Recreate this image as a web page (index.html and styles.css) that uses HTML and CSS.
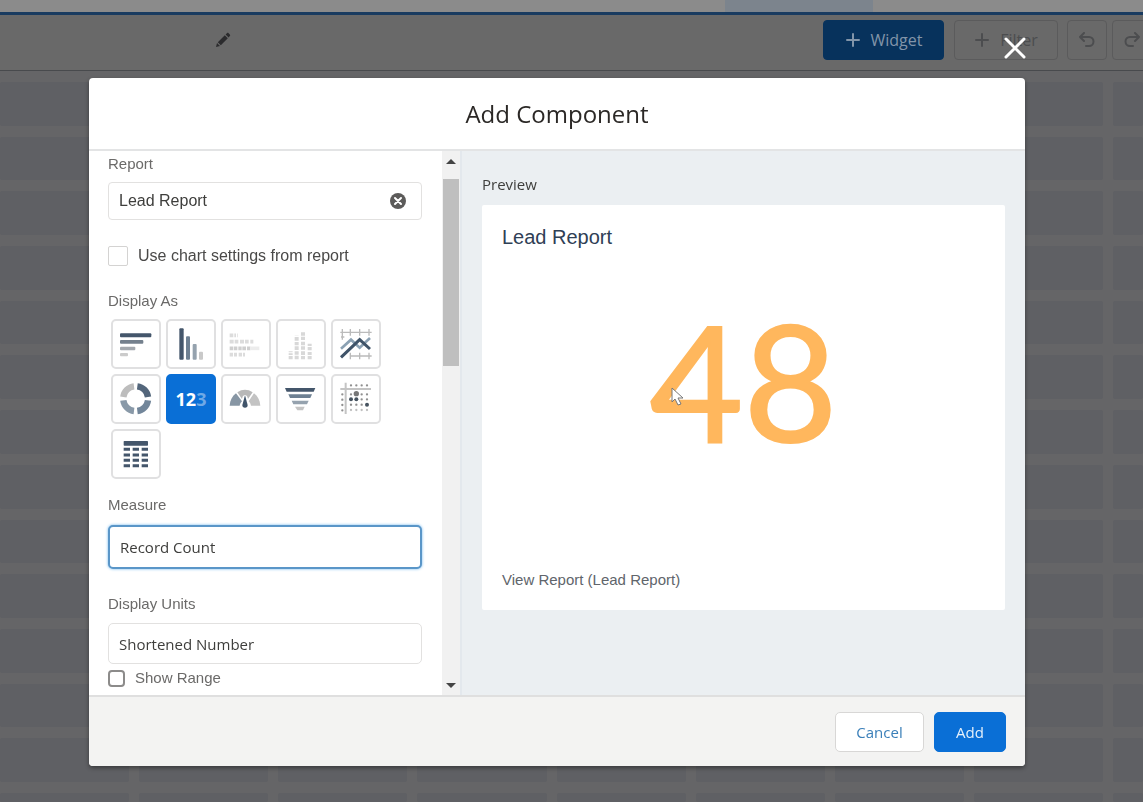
FILE: index.html
```html
<!DOCTYPE html>
<html lang="en">
<head>
    <meta charset="UTF-8">
    <meta name="viewport" content="width=device-width, initial-scale=1.0">
    <title>Add Component</title>
    <link rel="stylesheet" href="styles.css">
</head>
<body>
    <div class="page">
        <div class="tab-bar">
            <div class="tab-active"></div>
        </div>
        <div class="toolbar">
            <button class="edit-title" aria-label="Edit dashboard name">
                <svg width="16" height="16" viewBox="0 0 16 16" fill="#2b2b2d">
                    <path d="M1 15l1-4 3 3zM2.8 10.2l7-7 3 3-7 7zM10.6 2.400l1.300-1.200c.5-.5 1.200-.5 1.700 0l1.200 1.200c.5.5.5 1.200 0 1.700l-1.200 1.300z"/>
                </svg>
            </button>
            <div class="toolbar-actions">
                <button class="tool-button widget">
                    <svg width="16" height="16" viewBox="0 0 16 16" stroke="currentColor" stroke-width="2" stroke-linecap="round"><path d="M8 2v12M2 8h12"/></svg>
                    Widget
                </button>
                <button class="tool-button filter">
                    <svg width="16" height="16" viewBox="0 0 16 16" stroke="currentColor" stroke-width="2" stroke-linecap="round"><path d="M8 2v12M2 8h12"/></svg>
                    Filter
                </button>
                <button class="tool-button history" aria-label="Undo">
                    <svg width="16" height="16" viewBox="0 0 16 16" fill="none" stroke="currentColor" stroke-width="2" stroke-linecap="round" stroke-linejoin="round"><path d="M5 1L1 5l4 4M1 5h9a4.500 4.500 0 0 1 0 9H7"/></svg>
                </button>
                <button class="tool-button history" aria-label="Redo">
                    <svg width="16" height="16" viewBox="0 0 16 16" fill="none" stroke="currentColor" stroke-width="2" stroke-linecap="round" stroke-linejoin="round"><path d="M11 1l4 4-4 4M15 5H6a4.500 4.500 0 0 0 0 9h3"/></svg>
                </button>
            </div>
        </div>
        <div class="canvas-grid" id="canvas-grid"></div>
    </div>

    <div class="backdrop">
        <div class="modal" role="dialog" aria-labelledby="modal-title">
            <button class="close" aria-label="Close">
                <svg width="22" height="22" viewBox="0 0 22 22" stroke="#fff" stroke-width="3" stroke-linecap="round"><path d="M2 2l18 18M20 2L2 20"/></svg>
            </button>
            <div class="modal-header">
                <h1 id="modal-title">Add Component</h1>
            </div>

            <div class="modal-body">
                <div class="settings">
                    <label for="report">Report</label>
                    <div class="report-field">
                        <input type="text" id="report" value="Lead Report">
                        <button class="clear" aria-label="Clear report">
                            <svg width="16" height="16" viewBox="0 0 16 16"><circle cx="8" cy="8" r="8" fill="#5c5b5a"/><path d="M5 5l6 6M11 5l-6 6" stroke="#fff" stroke-width="2" stroke-linecap="round"/></svg>
                        </button>
                    </div>

                    <div class="check-row">
                        <input type="checkbox" id="use-chart">
                        <label for="use-chart">Use chart settings from report</label>
                    </div>

                    <div class="section-label" id="display-as">Display As</div>
                    <div class="chart-types" role="group" aria-labelledby="display-as">
                        <button class="chart-type" aria-label="Horizontal bar">
                            <svg viewBox="6 6 138 138">
                                <rect x="27" y="43" width="94" height="12" rx="3" fill="#44566b"/>
                                <rect x="27" y="63" width="70" height="11" rx="3" fill="#74808d"/>
                                <rect x="27" y="83" width="46" height="11" rx="3" fill="#a3a8ae"/>
                                <rect x="27" y="102" width="24" height="10" rx="3" fill="#cbcbcb"/>
                            </svg>
                        </button>
                        <button class="chart-type" aria-label="Vertical bar">
                            <svg viewBox="6 6 138 138">
                                <rect x="40" y="28" width="13" height="94" rx="3" fill="#44566b"/>
                                <rect x="60" y="52" width="12" height="70" rx="3" fill="#6e8092"/>
                                <rect x="80" y="75" width="12" height="47" rx="3" fill="#95a2ae"/>
                                <rect x="99" y="98" width="12" height="24" rx="3" fill="#c9c9c9"/>
                            </svg>
                        </button>
                        <button class="chart-type" aria-label="Stacked horizontal bar">
                            <svg viewBox="6 6 138 138" stroke="#dcdcdc" stroke-width="11">
                                <path d="M26 49h24" stroke-dasharray="11 3 5 3"/>
                                <path d="M26 68h71" stroke-dasharray="12 3 11 5"/>
                                <path d="M26 88h62" stroke-dasharray="10 2 11 3" stroke="#cfcfcf"/>
                                <path d="M88 88h27" stroke="#ececec"/>
                                <path d="M26 107h46" stroke-dasharray="10 3 9 5"/>
                            </svg>
                        </button>
                        <button class="chart-type" aria-label="Stacked vertical bar">
                            <svg viewBox="6 6 138 138" stroke="#d8d8d8" stroke-width="12">
                                <path d="M44 121V97" stroke-dasharray="10 3 5 3"/>
                                <path d="M62 121V50" stroke-dasharray="11 3 10 4"/>
                                <path d="M81 121V40" stroke-dasharray="10 3 11 5"/>
                                <path d="M101 121V74" stroke-dasharray="10 3 9 5"/>
                            </svg>
                        </button>
                        <button class="chart-type" aria-label="Line">
                            <svg viewBox="6 6 138 138" fill="none">
                                <path d="M28 40h94M56 111h66M34 30v32M58 30v20M86 30v20M114 30v20M58 101v20M86 101v20M114 101v20M30 54h10" stroke="#bbb" stroke-width="4"/>
                                <path d="M30 89l30-27 26 24 31-29" stroke="#8ba1b3" stroke-width="8"/>
                                <path d="M30 115l56-53 31 28" stroke="#3f5368" stroke-width="9"/>
                            </svg>
                        </button>
                        <button class="chart-type" aria-label="Donut">
                            <svg viewBox="6 6 138 138" fill="none" stroke-width="19">
                                <path d="M79 37a37 37 0 0 1 32 32" stroke="#53667b"/>
                                <path d="M111 79a37 37 0 0 1-32 32" stroke="#72869a"/>
                                <path d="M69 111a37 37 0 0 1-32-32" stroke="#8999a8"/>
                                <path d="M37 69a37 37 0 0 1 32-32" stroke="#bdbdbd"/>
                            </svg>
                        </button>
                        <button class="chart-type selected" aria-label="Metric">1<span>2</span><span class="faded">3</span></button>
                        <button class="chart-type" aria-label="Gauge">
                            <svg viewBox="6 6 138 138">
                                <path d="M26 95c1-16 8-29 19-37l18 24c-4 4-6 8-7 13z" fill="#8796a4"/>
                                <path d="M49 55c15-10 31-10 46 0L81 75c-1-5-3-12-9-12s-8 7-9 12z" fill="#b8b8b8"/>
                                <path d="M99 58c11 8 18 21 19 37H90c-1-5-3-9-7-13z" fill="#c3c3c3"/>
                                <path d="M72 64l8 29a8 8 0 1 1-16 0z" fill="#40546a"/>
                            </svg>
                        </button>
                        <button class="chart-type" aria-label="Funnel">
                            <svg viewBox="6 6 138 138">
                                <path d="M27 42h91l-5 11H32z" fill="#44566b"/>
                                <path d="M37 61h71l-5 11H42z" fill="#6e8092"/>
                                <path d="M47 80h51l-5 11H52z" fill="#95a2ae"/>
                                <path d="M57 98h29l-5 11H64z" fill="#c4c4c4"/>
                            </svg>
                        </button>
                        <button class="chart-type" aria-label="Scatter">
                            <svg viewBox="6 6 138 138" fill="#46535f">
                                <path d="M44 26v94M28 45h92" stroke="#c4c4c4" stroke-width="6"/>
                                <g fill="none" stroke="#909090" stroke-width="7" stroke-linecap="round" stroke-dasharray="0 16">
                                    <path d="M60 34h50M34 61v50M60 61h50M60 76h50M60 92h50"/>
                                    <path d="M60 108h50" stroke="#c0c0c0"/>
                                </g>
                                <circle cx="76" cy="59" r="8" fill="#777"/>
                                <circle cx="60" cy="76" r="6"/>
                                <circle cx="76" cy="76" r="6"/>
                                <circle cx="108" cy="92" r="6"/>
                            </svg>
                        </button>
                        <button class="chart-type" aria-label="Table">
                            <svg viewBox="6 6 138 138">
                                <rect x="38" y="36" width="73" height="14" rx="2" fill="#44566b"/>
                                <path d="M38 61h73M38 78h73M38 94h73M38 110h73" stroke="#44566b" stroke-width="9" stroke-dasharray="19 8"/>
                            </svg>
                        </button>
                    </div>

                    <label for="measure">Measure</label>
                    <select id="measure" class="focused">
                        <option>Record Count</option>
                    </select>

                    <label for="units" class="units-label">Display Units</label>
                    <select id="units">
                        <option>Shortened Number</option>
                    </select>

                    <div class="range-row">
                        <input type="checkbox" id="show-range">
                        <label for="show-range">Show Range</label>
                    </div>
                </div>

                <div class="scrollbar" aria-hidden="true">
                    <div class="arrow up"></div>
                    <div class="track"><div class="thumb"></div></div>
                    <div class="arrow down"></div>
                </div>

                <div class="preview">
                    <h2>Preview</h2>
                    <div class="card">
                        <h3>Lead Report</h3>
                        <div class="metric">48</div>
                        <a href="#">View Report (Lead Report)</a>
                        <svg class="pointer" width="13" height="19" viewBox="0 0 13 19"><path d="M1 1v14l3-3 3 6 3-1-3-6h5z" fill="#fff" stroke="#777" stroke-width="1"/></svg>
                    </div>
                </div>
            </div>

            <div class="modal-footer">
                <button class="cancel">Cancel</button>
                <button class="add">Add</button>
            </div>
        </div>
    </div>

    <script>
        // Fill the dashboard canvas with empty cells
        var grid = document.getElementById("canvas-grid");
        for (var i = 0; i < 9 * 14; i++) {
            grid.appendChild(document.createElement("div"));
        }
    </script>
</body>
</html>
```
FILE: styles.css
```css
* {
    box-sizing: border-box;
}

body {
    margin: 0;
    font-family: "Liberation Sans", Arial, sans-serif;
    font-size: 16px;
    color: #3e3e3c;
}

button, input, select {
    font: inherit;
    color: inherit;
    margin: 0;
}

button {
    padding: 0;
    border: none;
    background: none;
    cursor: pointer;
}

/* Dimmed dashboard behind the modal */
.page {
    height: 100vh;
    display: flex;
    flex-direction: column;
    overflow: hidden;
    background-color: #656567;
}

.tab-bar {
    flex: none;
    height: 15px;
    display: flex;
    background-color: #8b8b8b;
    border-bottom: 3px solid #193b60;
}

.tab-active {
    width: 148px;
    margin-left: auto;
    margin-right: 270px;
    background-color: #7c848d;
}

.toolbar {
    flex: none;
    height: 56px;
    display: flex;
    justify-content: space-between;
    align-items: center;
    padding-left: 215px;
    padding-bottom: 6px;
    background-color: #696969;
    border-bottom: 1px solid #484a4d;
    overflow: hidden;
}

.edit-title svg, .tool-button svg, .close svg, .clear svg {
    display: block;
}

.toolbar-actions {
    display: flex;
    margin-right: -9px;
}

.tool-button {
    height: 40px;
    display: flex;
    align-items: center;
    justify-content: center;
    gap: 10px;
    border: 1px solid #5b5b5c;
    border-radius: 4px;
    color: #4c4d4f;
    font-family: "Open Sans", "Noto Sans", sans-serif;
}

.widget {
    width: 121px;
    background-color: #07325c;
    border-color: #07325c;
    color: #8295a9;
    margin-right: 10px;
}

.filter {
    width: 104px;
    margin-right: 9px;
}

.history {
    width: 40px;
    margin-right: 5px;
}

.history:last-child {
    margin-right: 0;
}

.canvas-grid {
    flex: 1;
    display: grid;
    grid-template-columns: repeat(8, 1fr) 30px;
    grid-template-rows: repeat(13, 1fr) 9px;
    gap: 11px 10px;
    padding-top: 11px;
}

.canvas-grid div {
    background-color: #5f6064;
    border-radius: 2px;
}

/* Modal */
.backdrop {
    position: fixed;
    inset: 0;
    display: flex;
    padding: 78px 118px 36px 89px;
}

.modal {
    position: relative;
    flex: 1;
    display: flex;
    flex-direction: column;
    min-width: 0;
    background-color: #fff;
    border-radius: 4px;
    box-shadow: 0 2px 4px rgba(0, 0, 0, 0.4);
}

.close {
    position: absolute;
    top: -41px;
    right: -1px;
}

.modal-header {
    height: 73px;
    display: flex;
    align-items: center;
    justify-content: center;
    border-bottom: 2px solid #e3e4e5;
}

h1, h2, h3 {
    margin: 0;
    font-weight: normal;
}

h1 {
    font-family: "Open Sans", "Noto Sans", sans-serif;
    font-size: 24px;
    color: #2b2826;
}

.modal-body {
    flex: 1;
    min-height: 0;
    display: flex;
}

.settings {
    width: 353px;
    flex: none;
    padding: 3px 20px 0 19px;
    overflow: hidden;
}

.settings label, .section-label {
    display: block;
    font-size: 15px;
    line-height: 20px;
    color: #6b6a69;
}

.report-field {
    display: flex;
    align-items: center;
    height: 38px;
    margin-top: 8px;
    padding: 0 15px 0 10px;
    border: 1px solid #e2e1e0;
    border-radius: 4px;
}

.report-field input {
    flex: 1;
    min-width: 0;
    padding: 0;
    border: none;
    outline: none;
}

.check-row {
    display: flex;
    align-items: center;
    gap: 10px;
    margin: 26px 0 25px;
}

.settings .check-row label {
    font-size: 16px;
    color: #4a4948;
}

input[type="checkbox"] {
    appearance: none;
    flex: none;
    width: 20px;
    height: 20px;
    border: 1px solid #d4d3d2;
    border-radius: 2px;
    background-color: #fff;
}

.chart-types {
    display: flex;
    flex-wrap: wrap;
    gap: 5px;
    margin: 8px 0 16px;
    padding-left: 3px;
}

.chart-type {
    width: 50px;
    height: 50px;
    display: flex;
    align-items: center;
    justify-content: center;
    border: 2px solid #e0e0e1;
    border-radius: 5px;
    background-color: #fff;
}

.chart-type svg {
    width: 46px;
    height: 46px;
}

.chart-type.selected {
    background-color: #0a6fd6;
    border-color: #0a6fd6;
    color: #fff;
    font-family: "Open Sans", sans-serif;
    font-size: 18px;
    font-weight: bold;
}

.faded {
    color: #6fa9e6;
}

select {
    appearance: none;
    display: block;
    width: 100%;
    height: 41px;
    margin-top: 9px;
    padding: 0 10px;
    border: 1px solid #e2e1e0;
    border-radius: 5px;
    background-color: #fff;
    font-family: "Open Sans", "Noto Sans", sans-serif;
    font-size: 15px;
}

select.focused {
    height: 44px;
    margin-top: 10px;
    border: 2px solid #5a96c8;
    box-shadow: 0 0 3px #6cb5ee;
}

.settings .units-label {
    margin-top: 25px;
}

.range-row {
    display: flex;
    align-items: center;
    gap: 10px;
    margin-top: 4px;
}

.range-row input[type="checkbox"] {
    width: 17px;
    height: 17px;
    border: 2px solid #8c8b8a;
    border-radius: 4px;
}

.scrollbar {
    flex: none;
    width: 18px;
    display: flex;
    flex-direction: column;
    background-color: #f1f1f1;
}

.track {
    flex: 1;
    padding: 8px 1px 0;
}

.thumb {
    height: 187px;
    background-color: #bfbfbf;
}

.arrow {
    height: 20px;
    display: flex;
    align-items: center;
    justify-content: center;
}

.arrow::before {
    content: "";
    border: 5px solid transparent;
    border-top-width: 0;
    border-bottom: 5px solid #444;
}

.arrow.down::before {
    border-top: 5px solid #444;
    border-bottom-width: 0;
}

.preview {
    flex: 1;
    min-width: 0;
    display: flex;
    flex-direction: column;
    padding: 22px 20px 85px 20px;
    border-left: 2px solid #e3e8ed;
    background-color: #ebeff2;
}

h2 {
    font-family: "Open Sans", "Noto Sans", sans-serif;
    font-size: 15px;
    line-height: 22px;
    margin-bottom: 10px;
}

.card {
    position: relative;
    flex: 1;
    display: flex;
    flex-direction: column;
    justify-content: space-between;
    padding: 20px;
    background-color: #fff;
    border-radius: 2px;
}

h3 {
    font-size: 20px;
    line-height: 24px;
    color: #2f4055;
}

.metric {
    font-family: Lato, "Liberation Sans", sans-serif;
    font-size: 162px;
    line-height: 168px;
    text-align: center;
    padding-bottom: 60px;
    color: #ffb75d;
    -webkit-text-stroke: 2px #ffb75d;
}

.card a {
    font-size: 15px;
    line-height: 20px;
    color: #60656b;
    text-decoration: none;
}

/* Mouse pointer hovering over the number */
.pointer {
    position: absolute;
    left: 189px;
    top: 182px;
}

.modal-footer {
    height: 71px;
    display: flex;
    align-items: center;
    justify-content: flex-end;
    gap: 10px;
    padding-right: 19px;
    border-top: 2px solid #dfdfdf;
    border-radius: 0 0 4px 4px;
    background-color: #f3f3f2;
}

.modal-footer button {
    height: 40px;
    border: 1px solid #d8d7d6;
    border-radius: 5px;
    background-color: #fff;
    color: #3a7fb9;
    font-family: "Open Sans", "Noto Sans", sans-serif;
    font-size: 15px;
}

.modal-footer .cancel {
    width: 89px;
}

.modal-footer .add {
    width: 72px;
    background-color: #0a6fd6;
    border-color: #0a6fd6;
    color: #e4f0fb;
}
```
